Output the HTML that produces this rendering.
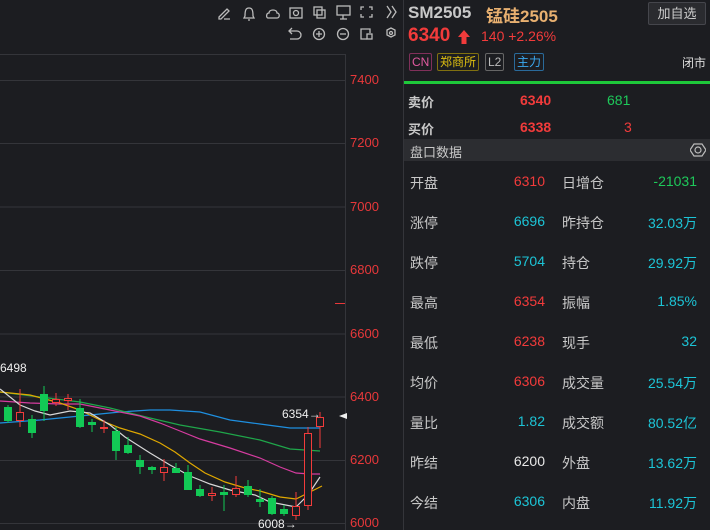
<!DOCTYPE html>
<html><head><meta charset="utf-8"><style>
body{margin:0;width:710px;height:530px;background:#1c1d21;overflow:hidden;font-family:"Liberation Sans","Noto Sans CJK SC",sans-serif;position:relative}
.a{position:absolute;white-space:nowrap}
.ax{color:#e8383a;font-size:13px}
.lab{color:#c8c8c8;font-size:14px;left:410px}
.v{font-size:14px;text-align:right}
.r{color:#f23b3b}.t{color:#1cc4d6}.g{color:#1ec85a}.w{color:#e8e8e8}
.tag{position:absolute;top:53px;height:16px;font-size:12px;line-height:16px;border:1px solid;border-radius:2px;padding:0 2px}
</style></head><body>
<svg class="a" style="left:0;top:0" width="403" height="530">
<g stroke="#34353a" stroke-width="1" fill="none">
<path d="M0 54.5H345.5V530"/>
<path d="M0 80.5H345M0 143.5H345M0 207H345M0 270.5H345M0 334H345M0 397H345M0 460.5H345M0 523.5H345"/>
</g>
<path d="M335 303.5H345" stroke="#e8383a"/>
<g fill="none" stroke="#bbb" stroke-width="1.3">
<path d="M219 17l8-8 2 2-8 8h-2zM224 19h6"/>
<path d="M245 16c0-6 1-8 4-8s4 2 4 8l1 2h-10zM248 20h2"/>
<path d="M268 18c-2 0-2-5 1-5 0-4 8-4 8 0 3 0 3 5 0 5z"/>
<rect x="290" y="8" width="12" height="10"/><circle cx="296" cy="13" r="2.5"/>
<rect x="314" y="7" width="8" height="8"/><rect x="317" y="10" width="8" height="8"/>
<rect x="337" y="6" width="13" height="9"/><path d="M340 19h7M343 15v4"/>
<path d="M361 10V7h3M369 7h3v3M372 14v3h-3M364 17h-3v-3"/>
<path d="M387 6l4 6-4 6M392 6l4 6-4 6"/>
<path d="M290 31h7a4 4 0 010 8h-7M292 28l-3 3 3 3"/>
<circle cx="319" cy="34" r="5.5"/><path d="M316 34h6M319 31v6"/>
<circle cx="343" cy="34" r="5.5"/><path d="M340 34h6"/>
<path d="M367 39h-6v-10h9v4"/><rect x="367" y="34" width="5" height="5"/>
<path d="M387 30l4-2 4 2v5l-4 2-4-2z"/><circle cx="391" cy="33" r="1.5"/>
</g>
<g fill="none" stroke-width="1.2">
<polyline stroke="#1e8fe0" points="0,423 40,420 80,416 120,412 150,410 170,410 200,412 230,420 260,424 290,428 305,428 320,428"/>
<polyline stroke="#1fa64a" points="0,392 40,397 80,402 110,408 150,418 180,425 220,432 260,440 290,449 305,450 320,451"/>
<polyline stroke="#d63ca0" points="0,401 30,403 60,404 80,404 110,410 140,416 160,423 180,431 200,439 230,448 260,458 280,467 296,473 310,474 320,474"/>
<polyline stroke="#e0a800" points="0,392 30,395 60,403 80,410 100,420 120,428 140,434 160,443 175,452 190,463 205,473 225,482 245,488 260,491 280,497 296,499 310,492 322,486"/>
<polyline stroke="#d8d8d8" points="0,389 20,405 35,411 50,415 70,411 90,413 110,425 125,437 150,453 170,465 190,476 210,484 230,490 255,495 270,502 296,507 308,495 320,477"/>
</g>
<g id="c"></g>
<text x="0" y="372" fill="#eee" font-size="12" font-family="Liberation Sans">6498</text>
<text x="282" y="418" fill="#eee" font-size="12" font-family="Liberation Sans">6354→</text>
<text x="258" y="528" fill="#eee" font-size="12" font-family="Liberation Sans">6008→</text>
<path d="M339 416l8-3v6z" fill="#eee"/>
</svg>
<script>
var d=[[8,'g',407,421,405,423],[20,'r',412,421,389,427],[32,'g',419,433,415,438],[44,'g',394,411,386,421],[56,'r',399,403,393,406],[68,'r',398,401,394,410],[80,'g',408,427,399,428],[92,'g',422,425,419,432],[104,'r',427,428,420,433],[116,'g',431,451,427,460],[128,'g',445,453,437,454],[140,'g',460,467,455,474],[152,'g',467,470,466,474],[164,'r',467,473,459,481],[176,'g',468,473,463,473],[188,'g',472,490,465,490],[200,'g',489,496,485,497],[212,'r',493,496,487,501],[224,'g',492,495,485,511],[236,'r',488,495,476,497],[248,'g',486,495,480,497],[260,'g',499,502,489,507],[272,'g',498,514,496,515],[284,'g',509,514,505,516],[296,'r',506,516,492,520],[308,'r',433,506,427,510],[320,'r',417,427,412,448]];
var s='';d.forEach(function(c){var col=c[1]=='g'?'#12c955':'#f23b3b';s+='<line x1="'+c[0]+'" x2="'+c[0]+'" y1="'+c[4]+'" y2="'+c[5]+'" stroke="'+col+'"/>';
if(c[1]=='g')s+='<rect x="'+(c[0]-4)+'" y="'+c[2]+'" width="8" height="'+Math.max(1,c[3]-c[2])+'" fill="'+col+'"/>';
else s+='<rect x="'+(c[0]-3.5)+'" y="'+(c[2]+.5)+'" width="7" height="'+Math.max(1,c[3]-c[2]-1)+'" fill="#1c1d21" stroke="'+col+'"/>';});
document.getElementById('c').innerHTML=s;
</script>
<div class="a ax" style="left:350px;top:72px">7400</div>
<div class="a ax" style="left:350px;top:135px">7200</div>
<div class="a ax" style="left:350px;top:199px">7000</div>
<div class="a ax" style="left:350px;top:262px">6800</div>
<div class="a ax" style="left:350px;top:326px">6600</div>
<div class="a ax" style="left:350px;top:389px">6400</div>
<div class="a ax" style="left:350px;top:452px">6200</div>
<div class="a ax" style="left:350px;top:515px">6000</div>

<div class="a" style="left:403px;top:0;width:1px;height:530px;background:#34353a"></div>
<div class="a" style="left:408px;top:3px;font-size:17px;font-weight:bold;color:#c8c8c8">SM2505</div>
<div class="a" style="left:486px;top:2px;font-size:17px;font-weight:bold;color:#e8b070">锰硅2505</div>
<div class="a" style="left:648px;top:2px;width:56px;height:21px;border:1px solid #45464c;background:#2a2b2f;border-radius:2px;color:#ccc;font-size:13px;line-height:21px;text-align:center">加自选</div>
<div class="a r" style="left:408px;top:25px;font-size:19px;font-weight:bold">6340</div>
<svg class="a" style="left:458px;top:30px" width="12" height="14"><path d="M6 0L12 7H8.5V14H3.5V7H0z" fill="#f23b3b"/></svg>
<div class="a r" style="left:481px;top:28px;font-size:14px">140 +2.26%</div>
<div class="tag" style="left:409px;color:#e05aa0;border-color:#80305a">CN</div>
<div class="tag" style="left:437px;color:#e0c010;border-color:#807010">郑商所</div>
<div class="tag" style="left:485px;color:#bbb;border-color:#666">L2</div>
<div class="tag" style="left:514px;color:#3aa8f0;border-color:#2a6a9a">主力</div>
<div class="a" style="left:682px;top:54px;color:#ddd;font-size:12px">闭市</div>
<div class="a" style="left:404px;top:81px;width:306px;height:3px;background:#1ec83a"></div>
<div class="a" style="left:408px;top:92px;font-size:13px;font-weight:bold;color:#c8c8c8">卖价</div>
<div class="a r" style="left:520px;top:92px;font-size:14px;font-weight:bold">6340</div>
<div class="a g" style="left:607px;top:92px;font-size:14px">681</div>
<div class="a" style="left:408px;top:119px;font-size:13px;font-weight:bold;color:#c8c8c8">买价</div>
<div class="a r" style="left:520px;top:119px;font-size:14px;font-weight:bold">6338</div>
<div class="a r" style="left:624px;top:119px;font-size:14px">3</div>
<div class="a" style="left:404px;top:139px;width:306px;height:22px;background:#2c2d31"></div>
<div class="a" style="left:410px;top:142px;font-size:13px;color:#c8c8c8">盘口数据</div>
<svg class="a" style="left:690px;top:142px" width="16" height="16"><path d="M4 2h8l4 6-4 6H4L0 8z M8 5a3 3 0 100 6 3 3 0 100-6" fill="none" stroke="#bbb" stroke-width="1.2"/></svg>

<div class="a lab" style="top:173px">开盘</div><div class="a v r" style="right:165px;top:173px">6310</div>
<div class="a lab" style="left:562px;top:173px">日增仓</div><div class="a v g" style="right:13px;top:173px">-21031</div>
<div class="a lab" style="top:213px">涨停</div><div class="a v t" style="right:165px;top:213px">6696</div>
<div class="a lab" style="left:562px;top:213px">昨持仓</div><div class="a v t" style="right:13px;top:213px">32.03万</div>
<div class="a lab" style="top:253px">跌停</div><div class="a v t" style="right:165px;top:253px">5704</div>
<div class="a lab" style="left:562px;top:253px">持仓</div><div class="a v t" style="right:13px;top:253px">29.92万</div>
<div class="a lab" style="top:293px">最高</div><div class="a v r" style="right:165px;top:293px">6354</div>
<div class="a lab" style="left:562px;top:293px">振幅</div><div class="a v t" style="right:13px;top:293px">1.85%</div>
<div class="a lab" style="top:333px">最低</div><div class="a v r" style="right:165px;top:333px">6238</div>
<div class="a lab" style="left:562px;top:333px">现手</div><div class="a v t" style="right:13px;top:333px">32</div>
<div class="a lab" style="top:373px">均价</div><div class="a v r" style="right:165px;top:373px">6306</div>
<div class="a lab" style="left:562px;top:373px">成交量</div><div class="a v t" style="right:13px;top:373px">25.54万</div>
<div class="a lab" style="top:413px">量比</div><div class="a v t" style="right:165px;top:413px">1.82</div>
<div class="a lab" style="left:562px;top:413px">成交额</div><div class="a v t" style="right:13px;top:413px">80.52亿</div>
<div class="a lab" style="top:453px">昨结</div><div class="a v w" style="right:165px;top:453px">6200</div>
<div class="a lab" style="left:562px;top:453px">外盘</div><div class="a v t" style="right:13px;top:453px">13.62万</div>
<div class="a lab" style="top:493px">今结</div><div class="a v t" style="right:165px;top:493px">6306</div>
<div class="a lab" style="left:562px;top:493px">内盘</div><div class="a v t" style="right:13px;top:493px">11.92万</div>
</body></html>
